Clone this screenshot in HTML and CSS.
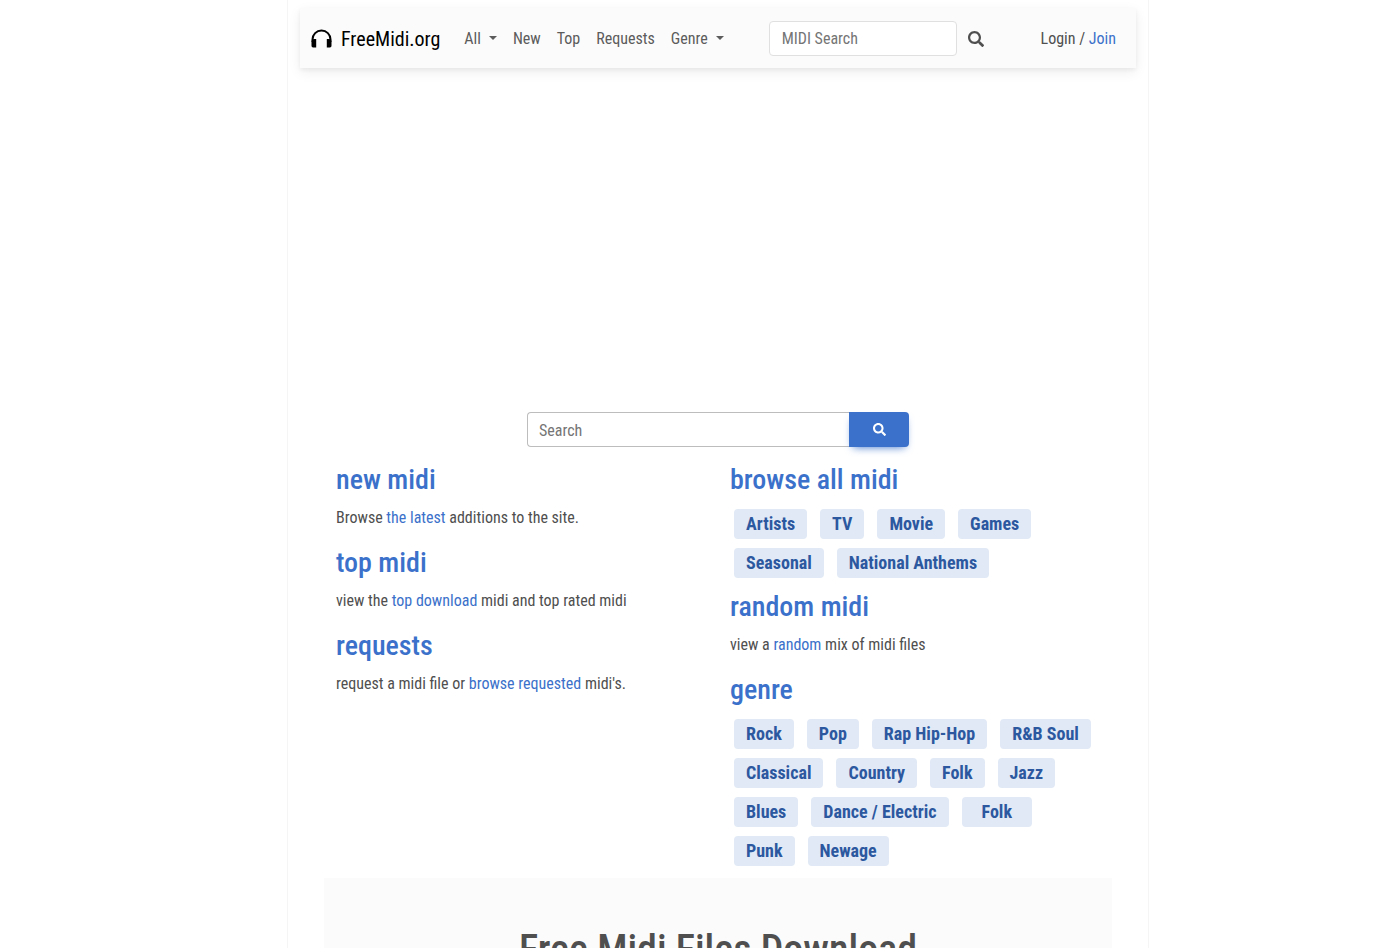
FILE: index.html
```html
<!DOCTYPE html>
<html lang="en">
<head>
    <meta charset="UTF-8">
    <meta name="viewport" content="width=device-width, initial-scale=1.0">
    <title>Free Midi Files Download - FreeMidi.org</title>
    <link rel="stylesheet" href="styles.css">
</head>
<body>
    <div class="container">
        <nav class="navbar">
            <a class="brand" href="#">
                <svg class="brand-icon" viewBox="0 0 21 20" aria-hidden="true">
                    <path d="M1.500 13v-2.500a9 9 0 0 1 18 0V13" fill="none" stroke="currentColor" stroke-width="2"/>
                    <path d="M3 10h2.200v8.500H2.200C1 18.500.5 17.600.5 16.500V13C.5 11.200 1.500 10 3 10zM18 10h-2.200v8.500h3c1.200 0 1.700-.9 1.700-2V13c0-1.800-1-3-2.500-3z"/>
                </svg>
                <span>FreeMidi.org</span>
            </a>
            <ul class="nav-links">
                <li><a class="dropdown" href="#">All</a></li>
                <li><a href="#">New</a></li>
                <li><a href="#">Top</a></li>
                <li><a href="#">Requests</a></li>
                <li><a class="dropdown" href="#">Genre</a></li>
            </ul>
            <form class="nav-search">
                <input type="search" placeholder="MIDI Search" aria-label="MIDI Search">
                <button type="submit" aria-label="Search">
                    <svg viewBox="0 0 512 512" aria-hidden="true"><path d="M505 442.700L405.300 343c-4.500-4.500-10.600-7-17-7H372c27.600-35.300 44-79.700 44-128C416 93.100 322.900 0 208 0S0 93.100 0 208s93.100 208 208 208c48.300 0 92.700-16.400 128-44v16.300c0 6.400 2.500 12.500 7 17l99.700 99.700c9.400 9.400 24.600 9.400 33.900 0l28.300-28.300c9.400-9.400 9.400-24.600.1-34zM208 346c-76 0-138-62-138-138S132 70 208 70s138 62 138 138-62 138-138 138z"/></svg>
                </button>
            </form>
            <div class="account"><a class="login" href="#">Login</a> / <a href="#">Join</a></div>
        </nav>

        <div class="ad-slot"></div>

        <main class="content">
            <form class="main-search">
                <input type="search" placeholder="Search" aria-label="Search">
                <button type="submit" aria-label="Search">
                    <svg viewBox="0 0 512 512" aria-hidden="true"><path d="M505 442.700L405.300 343c-4.500-4.500-10.600-7-17-7H372c27.600-35.300 44-79.700 44-128C416 93.100 322.900 0 208 0S0 93.100 0 208s93.100 208 208 208c48.300 0 92.700-16.400 128-44v16.300c0 6.400 2.500 12.500 7 17l99.700 99.700c9.400 9.400 24.600 9.400 33.900 0l28.300-28.300c9.400-9.400 9.400-24.600.1-34zM208 336c-70.700 0-128-57.200-128-128 0-70.700 57.200-128 128-128 70.700 0 128 57.200 128 128 0 70.700-57.200 128-128 128z"/></svg>
                </button>
            </form>

            <div class="row">
                <div class="col">
                    <h2><a href="#">new midi</a></h2>
                    <p>Browse <a href="#">the latest</a> additions to the site.</p>
                    <h2><a href="#">top midi</a></h2>
                    <p>view the <a href="#">top download</a> midi and top rated midi</p>
                    <h2><a href="#">requests</a></h2>
                    <p>request a midi file or <a href="#">browse requested</a> midi's.</p>
                </div>
                <div class="col">
                    <h2><a href="#">browse all midi</a></h2>
                    <div class="badges">
                        <a class="badge" href="#">Artists</a>
                        <a class="badge" href="#">TV</a>
                        <a class="badge" href="#">Movie</a>
                        <a class="badge" href="#">Games</a>
                        <a class="badge" href="#">Seasonal</a>
                        <a class="badge" href="#">National Anthems</a>
                    </div>
                    <h2><a href="#">random midi</a></h2>
                    <p>view a <a href="#">random</a> mix of midi files</p>
                    <h2><a href="#">genre</a></h2>
                    <div class="badges">
                        <a class="badge" href="#">Rock</a>
                        <a class="badge" href="#">Pop</a>
                        <a class="badge" href="#">Rap Hip-Hop</a>
                        <a class="badge" href="#">R&amp;B Soul</a>
                        <a class="badge" href="#">Classical</a>
                        <a class="badge" href="#">Country</a>
                        <a class="badge" href="#">Folk</a>
                        <a class="badge" href="#">Jazz</a>
                        <a class="badge" href="#">Blues</a>
                        <a class="badge" href="#">Dance / Electric</a>
                        <a class="badge badge-wide" href="#">Folk</a>
                        <a class="badge" href="#">Punk</a>
                        <a class="badge" href="#">Newage</a>
                    </div>
                </div>
            </div>

            <section class="intro">
                <h1>Free Midi Files Download</h1>
            </section>
        </main>
    </div>
</body>
</html>
```
FILE: styles.css
```css
* {
    box-sizing: border-box;
}
body {
    margin: 0;
    padding-left: 59px;
    font-family: "Roboto Condensed", "Liberation Sans Narrow", Roboto, sans-serif;
    font-size: 16px;
    line-height: 25px;
    color: #4f4f4f;
    background-color: #fff;
}
a {
    color: #3b71ca;
    text-decoration: none;
}
.container {
    max-width: 862px;
    margin: 0 auto;
    padding: 8px 12px 0;
    border: 1px solid #f5f5f5;
    border-width: 0 1px;
}
.navbar {
    display: flex;
    align-items: center;
    height: 60px;
    padding: 0 20px 0 11px;
    background-color: #fbfbfb;
    box-shadow: 0 4px 12px rgba(0,0,0,0.07), 0 2px 4px rgba(0,0,0,0.05);
}
.brand {
    display: flex;
    align-items: center;
    gap: 9px;
    margin-right: 24px;
    padding-top: 2px;
    font-size: 20px;
    color: #000;
}
.brand-icon {
    width: 21px;
    height: 20px;
}
.nav-links {
    display: flex;
    gap: 16px;
    margin: 0;
    padding: 0;
    list-style: none;
}
.nav-links a {
    color: #5c5c5c;
}
.dropdown::after {
    content: "";
    display: inline-block;
    margin-left: 8px;
    vertical-align: 4px;
    border: 4px solid transparent;
    border-top-color: currentColor;
    border-bottom: 0;
}
input {
    min-width: 0;
    height: 35px;
    padding: 0 11px;
    border: 1px solid #bdbdbd;
    border-radius: 4px;
    font: inherit;
    color: #4f4f4f;
    background-color: #fff;
}
input::placeholder {
    color: #757575;
}
.nav-search {
    display: flex;
    align-items: center;
    margin-left: 45px;
}
.nav-search input {
    width: 188px;
    padding: 0 12px;
    border-color: #e0e0e0;
}
.nav-search button {
    display: flex;
    padding: 2px 11px 0;
    border: 0;
    background: none;
    color: #4f4f4f;
    cursor: pointer;
}
.nav-search svg {
    width: 16px;
    height: 16px;
}
svg {
    fill: currentColor;
}
.account {
    margin-left: auto;
}
.login {
    color: #4f4f4f;
}
.ad-slot {
    height: 344px;
}
.content {
    padding: 0 24px;
}
.main-search {
    display: flex;
    width: 382px;
    max-width: 100%;
    margin: 0 auto 16px;
}
.main-search input {
    flex: 1;
    padding-top: 2px;
    border-right: 0;
    border-radius: 4px 0 0 4px;
}
.main-search button {
    display: flex;
    align-items: center;
    justify-content: center;
    width: 60px;
    border: 0;
    border-radius: 0 4px 4px 0;
    color: #fff;
    background-color: #3b71ca;
    box-shadow: 0 4px 9px -4px #3b71ca;
    cursor: pointer;
}
.main-search svg {
    width: 13px;
    height: 13px;
}
.row {
    display: grid;
    grid-template-columns: 1fr 1fr;
}
.col {
    padding: 0 12px;
}
h2 {
    margin: 0 0 8px;
    font-size: 28px;
    font-weight: 500;
    line-height: 34px;
}
p {
    margin: 0 0 16px;
}
.badges {
    display: flex;
    flex-wrap: wrap;
    gap: 9px 13px;
    margin: 12px 0;
    padding-left: 4px;
}
.badge {
    padding: 0 12px;
    border-radius: 4px;
    font-size: 18px;
    font-weight: 700;
    line-height: 30px;
    color: #2c58a0;
    background-color: #e2e9f6;
}
.badge-wide {
    padding: 0 20px;
}
.intro {
    padding: 48px;
    text-align: center;
    background-color: #fbfbfb;
}
h1 {
    margin: 0;
    font-size: 40px;
    font-weight: 500;
    line-height: 48px;
}
```
